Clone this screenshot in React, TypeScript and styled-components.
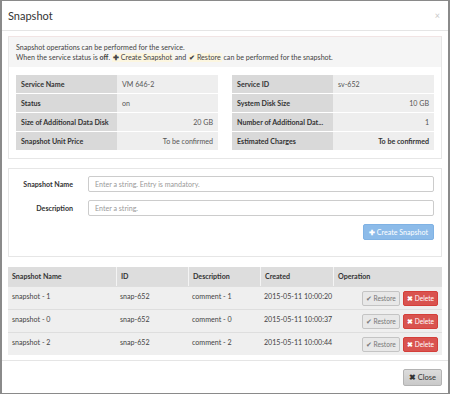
import React from "react";
import styled, { createGlobalStyle } from "styled-components";

const Global = createGlobalStyle`
  html, body { margin: 0; padding: 0; background: #fff; }
  body { font-family: Lato, "Noto Sans", sans-serif; color: #333; }
  * { box-sizing: border-box; }
`;

const Modal = styled.div`
  width: 450px;
  height: 394px;
  border: 1px solid #8a8a8a;
  border-left-width: 2px;
  border-right-width: 2px;
  background: #fff;
  display: flex;
  flex-direction: column;
  font-size: 7.1px;
`;

const Header = styled.div`
  height: 30px;
  flex: none;
  display: flex;
  align-items: center;
  justify-content: space-between;
  padding: 0 8px 0 6px;
  border-bottom: 1px solid #e5e5e5;
`;

const Title = styled.div`
  font-size: 11px;
  color: #333;
`;

const CloseX = styled.span`
  font-size: 9px;
  color: #c8c8c8;
`;

const Body = styled.div`
  flex: 1;
  padding: 5px 6px 0 6px;
  display: flex;
  flex-direction: column;
`;

const Panel = styled.div<{ $mt?: number; $tint?: boolean }>`
  border: 1px solid #e6e6e6;
  border-top-color: ${(p) => (p.$tint ? "#f1e4e4" : "#e6e6e6")};
  margin-top: ${(p) => p.$mt ?? 0}px;
`;

const Note = styled.div`
  background: #f5f5f5;
  padding: 6px 7px 4px;
  line-height: 10px;
  height: 30px;
  color: #444;
`;

const Mark = styled.span`
  background: #fcf6e0;
  padding: 0 1px;
`;

const InfoGrid = styled.div`
  display: grid;
  grid-template-columns: 1fr 1fr;
  gap: 14px;
  padding: 8px 7px 7px;
`;

const KVTable = styled.div`
  display: grid;
  grid-template-columns: 101px 1fr;
`;

const KLabel = styled.div`
  background: #d9d9d9;
  font-weight: 700;
  height: 19px;
  display: flex;
  align-items: center;
  padding: 0 5px;
  border-bottom: 1px solid #fff;
  white-space: nowrap;
  overflow: hidden;
`;

const KValue = styled.div<{ $right?: boolean; $bold?: boolean }>`
  background: #eeeeee;
  height: 19px;
  display: flex;
  align-items: center;
  justify-content: ${(p) => (p.$right ? "flex-end" : "flex-start")};
  padding: 0 5px;
  border-bottom: 1px solid #fff;
  font-weight: ${(p) => (p.$bold ? 700 : 400)};
  color: ${(p) => (p.$bold ? "#333" : "#555")};
`;

const Form = styled.div`
  padding: 7px 7px 16px;
  display: flex;
  flex-direction: column;
  gap: 8px;
`;

const FormRow = styled.div`
  display: grid;
  grid-template-columns: 57px 1fr;
  column-gap: 15px;
  align-items: center;
`;

const FLabel = styled.label`
  font-weight: 700;
  text-align: right;
  white-space: nowrap;
`;

const Input = styled.input`
  height: 16px;
  border: 1px solid #ccc;
  border-radius: 2px;
  padding: 0 6px;
  font: inherit;
  font-size: 7.1px;
  color: #555;
  outline: none;
  &::placeholder { color: #999; }
`;

const Actions = styled.div`
  display: flex;
  justify-content: flex-end;
`;

const PrimaryBtn = styled.button`
  height: 16px;
  padding: 0 5px;
  border: 1px solid #7fb2e4;
  border-radius: 2px;
  background: #8cbbe9;
  color: #fff;
  font: inherit;
  font-size: 7.1px;
  display: flex;
  align-items: center;
  gap: 2px;
`;

const Table = styled.div`
  margin-top: 10px;
  display: grid;
  grid-template-columns: 108px 72px 72px 73px 1fr;
`;

const Th = styled.div`
  background: #dddddd;
  font-weight: 700;
  height: 19px;
  display: flex;
  align-items: center;
  padding: 0 4px;
  border-left: 1px solid #f4f4f4;
  white-space: nowrap;
  &:first-child { border-left: none; }
`;

const Td = styled.div<{ $ops?: boolean }>`
  background: #efefef;
  height: 23px;
  display: flex;
  align-items: ${(p) => (p.$ops ? "center" : "flex-start")};
  justify-content: ${(p) => (p.$ops ? "flex-end" : "flex-start")};
  padding: ${(p) => (p.$ops ? "0 4px" : "5px 4px 0")};
  gap: 3px;
  border-top: 1px solid #dedede;
  color: #444;
  white-space: nowrap;
`;

const SmallBtn = styled.button<{ $danger?: boolean }>`
  height: 15px;
  padding: 0 3px;
  border-radius: 2px;
  border: 1px solid ${(p) => (p.$danger ? "#d43f3a" : "#c4c4c4")};
  background: ${(p) => (p.$danger ? "#d9534f" : "#e8e8e8")};
  color: ${(p) => (p.$danger ? "#fff" : "#777")};
  font: inherit;
  font-size: 6.6px;
  display: flex;
  align-items: center;
  gap: 2px;
`;

const Footer = styled.div`
  flex: none;
  border-top: 1px solid #e5e5e5;
  height: 33px;
  display: flex;
  align-items: center;
  justify-content: flex-end;
  padding: 0 6px;
`;

const CloseBtn = styled.button`
  height: 17px;
  padding: 0 5px;
  border: 1px solid #b3b3b3;
  border-radius: 2px;
  background: linear-gradient(#dcdcdc, #c9c9c9);
  color: #333;
  font: inherit;
  font-size: 7.5px;
  display: flex;
  align-items: center;
  gap: 2px;
`;

const Ico = styled.span`
  font-weight: 700;
`;

const info = [
  [
    ["Service Name", "VM 646-2", false, false],
    ["Status", "on", false, false],
    ["Size of Additional Data Disk", "20 GB", true, false],
    ["Snapshot Unit Price", "To be confirmed", true, false],
  ],
  [
    ["Service ID", "sv-652", false, false],
    ["System Disk Size", "10 GB", true, false],
    ["Number of Additional Dat...", "1", true, false],
    ["Estimated Charges", "To be confirmed", true, true],
  ],
] as [string, string, boolean, boolean][][];

const snaps = [
  ["snapshot - 1", "snap-652", "comment - 1", "2015-05-11 10:00:20"],
  ["snapshot - 0", "snap-652", "comment - 0", "2015-05-11 10:00:37"],
  ["snapshot - 2", "snap-652", "comment - 2", "2015-05-11 10:00:44"],
];

export default function App() {
  return (
    <>
      <Global />
      <Modal>
        <Header>
          <Title>Snapshot</Title>
          <CloseX>×</CloseX>
        </Header>
        <Body>
          <Panel $tint>
            <Note>
              Snapshot operations can be performed for the service.
              <br />
              When the service status is <b>off</b>. <Mark><Ico>✚</Ico> Create Snapshot</Mark> and{" "}
              <Mark><Ico>✔</Ico> Restore</Mark> can be performed for the snapshot.
            </Note>
            <InfoGrid>
              {info.map((tbl, i) => (
                <KVTable key={i}>
                  {tbl.map(([k, v, r, b]) => (
                    <React.Fragment key={k}>
                      <KLabel>{k}</KLabel>
                      <KValue $right={r} $bold={b}>{v}</KValue>
                    </React.Fragment>
                  ))}
                </KVTable>
              ))}
            </InfoGrid>
          </Panel>
          <Panel $mt={9}>
            <Form>
              <FormRow>
                <FLabel>Snapshot Name</FLabel>
                <Input placeholder="Enter a string. Entry is mandatory." />
              </FormRow>
              <FormRow>
                <FLabel>Description</FLabel>
                <Input placeholder="Enter a string." />
              </FormRow>
              <Actions>
                <PrimaryBtn><Ico>✚</Ico> Create Snapshot</PrimaryBtn>
              </Actions>
            </Form>
          </Panel>
          <Table>
            {["Snapshot Name", "ID", "Description", "Created", "Operation"].map((h) => (
              <Th key={h}>{h}</Th>
            ))}
            {snaps.map((s) => (
              <React.Fragment key={s[0]}>
                {s.map((c, j) => (
                  <Td key={j}>{c}</Td>
                ))}
                <Td $ops>
                  <SmallBtn>✔ Restore</SmallBtn>
                  <SmallBtn $danger><Ico>✖</Ico> Delete</SmallBtn>
                </Td>
              </React.Fragment>
            ))}
          </Table>
        </Body>
        <Footer>
          <CloseBtn><Ico>✖</Ico> Close</CloseBtn>
        </Footer>
      </Modal>
    </>
  );
}
